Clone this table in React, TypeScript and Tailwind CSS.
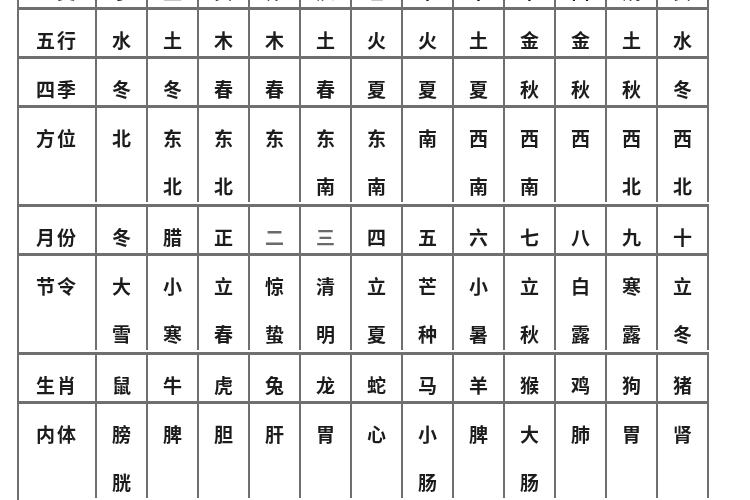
const rows: { label: string; cells: string[] }[] = [
  { label: "地支", cells: ["子", "丑", "寅", "卯", "辰", "巳", "午", "未", "申", "酉", "戌", "亥"] },
  { label: "五行", cells: ["水", "土", "木", "木", "土", "火", "火", "土", "金", "金", "土", "水"] },
  { label: "四季", cells: ["冬", "冬", "春", "春", "春", "夏", "夏", "夏", "秋", "秋", "秋", "冬"] },
  { label: "方位", cells: ["北", "东北", "东北", "东", "东南", "东南", "南", "西南", "西南", "西", "西北", "西北"] },
  { label: "月份", cells: ["冬", "腊", "正", "二", "三", "四", "五", "六", "七", "八", "九", "十"] },
  { label: "节令", cells: ["大雪", "小寒", "立春", "惊蛰", "清明", "立夏", "芒种", "小暑", "立秋", "白露", "寒露", "立冬"] },
  { label: "生肖", cells: ["鼠", "牛", "虎", "兔", "龙", "蛇", "马", "羊", "猴", "鸡", "狗", "猪"] },
  { label: "内体", cells: ["膀胱", "脾", "胆", "肝", "胃", "心", "小肠", "脾", "大肠", "肺", "胃", "肾"] },
];

// thin strokes come out faded in the scan
const faded = ["二", "三"];

function Cell({ text }: { text: string }) {
  // one character per line, stacked vertically
  return (
    <div className="flex w-[51px] shrink-0 flex-col items-center gap-[16px] border-r-2 border-[#6f6f6f] pt-[14px]">
      {text.split("").map((ch, i) => (
        <span
          key={i}
          className={`block leading-[32px] ${faded.includes(ch) ? "text-[#6a6a6a]" : ""}`}
        >
          {ch}
        </span>
      ))}
    </div>
  );
}

export default function App() {
  return (
    <div
      className="h-[500px] w-[750px] overflow-hidden bg-white text-[19px] font-bold text-[#1c1c1c]"
      style={{ fontFamily: '"Noto Sans CJK SC", "Noto Sans", sans-serif' }}
    >
      <div className="ml-[17px] mt-[-39px] w-fit border-l-2 border-[#6f6f6f] blur-[0.5px]">
        {rows.map((row) => {
          const multi = row.cells.some((c) => c.length > 1);
          return (
            <div
              key={row.label}
              className={`flex border-b-[3px] border-[#6f6f6f] ${multi ? "pb-[2px]" : ""}`}
            >
              <div className="w-[78px] shrink-0 border-r-2 border-[#6f6f6f] pt-[14px] text-center leading-[32px] tracking-[2px]">
                {row.label}
              </div>
              {row.cells.map((c, i) => (
                <Cell key={i} text={c} />
              ))}
            </div>
          );
        })}
      </div>
    </div>
  );
}
